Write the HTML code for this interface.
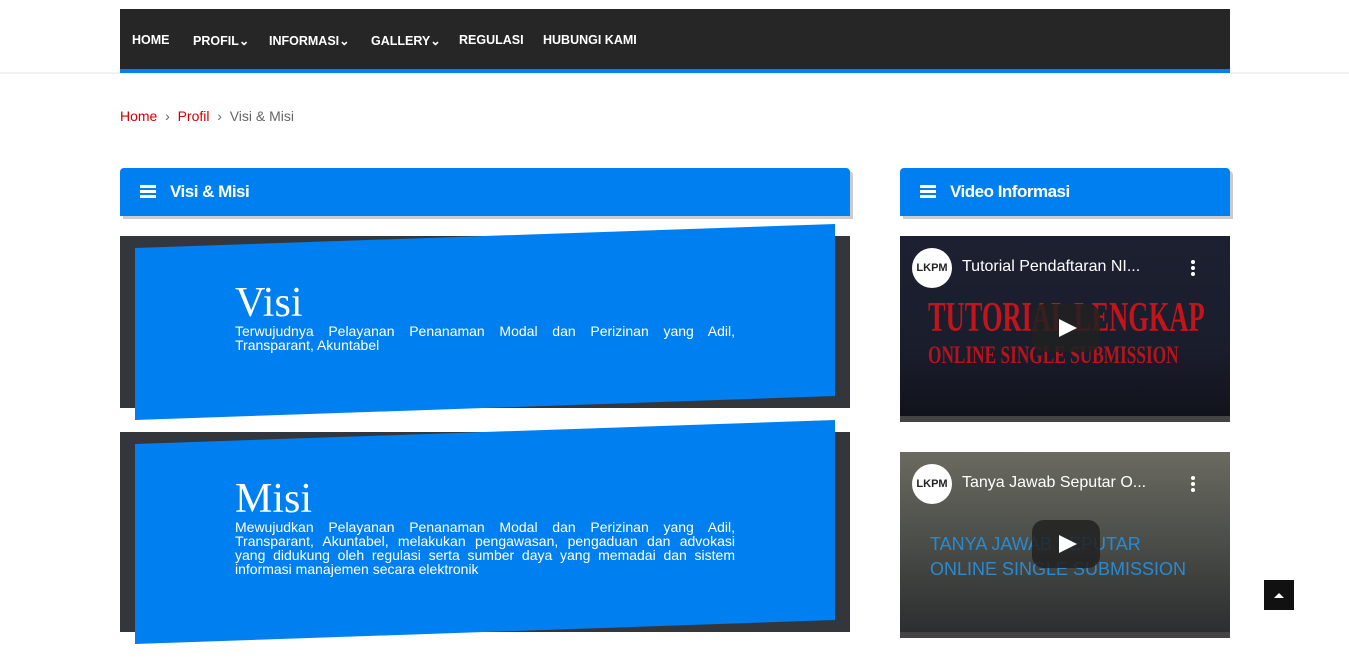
<!DOCTYPE html>
<html><head><meta charset="utf-8"><style>
*{margin:0;padding:0;box-sizing:border-box}
body{width:1349px;height:664px;background:#fff;font-family:"Liberation Sans",sans-serif;position:relative;overflow:hidden}
.topline{position:absolute;left:0;top:72px;width:1349px;height:2px;background:#f2f2f2}
nav{position:absolute;left:120px;top:9px;width:1110px;height:64px;background:#262626;border-bottom:4px solid #0080f0}
nav span{position:absolute;top:24px;color:#fff;font-weight:bold;font-size:12.5px}
.bc{position:absolute;left:120px;top:108px;font-size:14px;color:#666}
.bc a{color:#d40000;text-decoration:none}
.hd{position:absolute;top:168px;height:48px;background:#0080f0;border-radius:4px 4px 0 0;box-shadow:3px 3px 0 #ccc;color:#fff;font-weight:bold;font-size:16px}
.hd b{position:absolute;left:50px;top:14px;letter-spacing:-0.5px;font-size:17px}
.ic{position:absolute;left:20px;top:17px;width:16px;height:13px}
.ic i{display:block;height:3px;background:#fff;margin-bottom:2px}
.dark{position:absolute;left:120px;width:730px;background:#33363b}
svg{position:absolute;left:0;top:0}
.t{position:absolute;left:235px;width:500px;color:#fff}
.t h2{font-family:"Liberation Serif",serif;font-weight:normal;font-size:42px;line-height:42px}
.t span{display:block;font-size:14px;line-height:14px;text-align:justify;text-align-last:justify;white-space:nowrap}
.t span.l{text-align-last:left}
.vid{position:absolute;left:900px;width:330px;height:186px;background:#15171f;overflow:hidden}
.logo{position:absolute;left:12px;top:12px;width:40px;height:40px;border-radius:50%;background:#fff;color:#222;font-weight:bold;font-size:11px;text-align:center;line-height:40px}
.vt{position:absolute;left:62px;top:22px;color:#fff;font-size:16px}
.dots{position:absolute;left:291px;top:24px;width:4px}
.dots i{display:block;width:4px;height:4px;border-radius:50%;background:#fff;margin-bottom:2px}
.play{position:absolute;left:132px;top:68px;width:68px;height:48px;border-radius:12px;background:rgba(33,33,33,.85)}
.play:after{content:"";position:absolute;left:27px;top:15px;border-left:18px solid #fff;border-top:9px solid transparent;border-bottom:9px solid transparent}
.bar{position:absolute;left:0;bottom:0;width:330px;height:6px;background:#444}
.top{position:absolute;left:1264px;top:580px;width:30px;height:30px;background:#111}
.top:after{content:"";position:absolute;left:10px;top:13px;border-bottom:5px solid #fff;border-left:5px solid transparent;border-right:5px solid transparent}
.big{position:absolute;white-space:nowrap;transform-origin:0 0;font-family:'Liberation Serif',serif;font-weight:bold}
</style></head><body>
<div class="topline"></div>
<nav>
<span style="left:12px">HOME</span><span style="left:73px">PROFIL⌄</span><span style="left:149px">INFORMASI⌄</span><span style="left:251px">GALLERY⌄</span><span style="left:339px">REGULASI</span><span style="left:423px">HUBUNGI KAMI</span>
</nav>
<div class="bc"><a>Home</a> &nbsp;›&nbsp; <a>Profil</a> &nbsp;›&nbsp; Visi &amp; Misi</div>
<div class="hd" style="left:120px;width:730px"><div class="ic"><i></i><i></i><i></i></div><b>Visi &amp; Misi</b></div>
<div class="hd" style="left:900px;width:330px"><div class="ic"><i></i><i></i><i></i></div><b>Video Informasi</b></div>
<div class="dark" style="top:236px;height:172px"></div>
<div class="dark" style="top:432px;height:200px"></div>
<svg width="1349" height="664"><polygon fill="#0080f0" points="135,248 835,224 835,396 135,420"/><polygon fill="#0080f0" points="135,444 835,420 835,620 135,644"/></svg>
<div class="t" style="top:282px"><h2>Visi</h2><span>Terwujudnya Pelayanan Penanaman Modal dan Perizinan yang Adil,</span><span class="l">Transparant, Akuntabel</span></div>
<div class="t" style="top:478px"><h2>Misi</h2><span>Mewujudkan Pelayanan Penanaman Modal dan Perizinan yang Adil,</span><span>Transparant, Akuntabel, melakukan pengawasan, pengaduan dan advokasi</span><span>yang didukung oleh regulasi serta sumber daya yang memadai dan sistem</span><span class="l">informasi manajemen secara elektronik</span></div>
<div class="vid" style="top:236px;background:linear-gradient(180deg,#1c2030,#1a1d2c 60%,#10121a)">
<div class="big" style="left:28px;top:58px;color:#c3141c;font-size:42px;transform:scale(0.63,1.0)">TUTORIAL LENGKAP</div>
<div class="big" style="left:28px;top:106px;color:#b5141c;font-size:24px;transform:scale(0.72,1.05)">ONLINE SINGLE SUBMISSION</div>
<div class="logo">LKPM</div><div class="vt">Tutorial Pendaftaran NI...</div><div class="dots"><i></i><i></i><i></i></div><div class="play"></div><div class="bar"></div></div>
<div class="vid" style="top:452px;background:linear-gradient(180deg,#6a6a60,#4a4c48 50%,#2a2c2e)">
<div style="position:absolute;left:30px;top:80px;color:#2a8ad0;font-size:18px;line-height:25px">TANYA JAWAB SEPUTAR<br>ONLINE SINGLE SUBMISSION</div>
<div class="logo">LKPM</div><div class="vt">Tanya Jawab Seputar O...</div><div class="dots"><i></i><i></i><i></i></div><div class="play"></div><div class="bar"></div></div>
<div class="top"></div>
</body></html>
